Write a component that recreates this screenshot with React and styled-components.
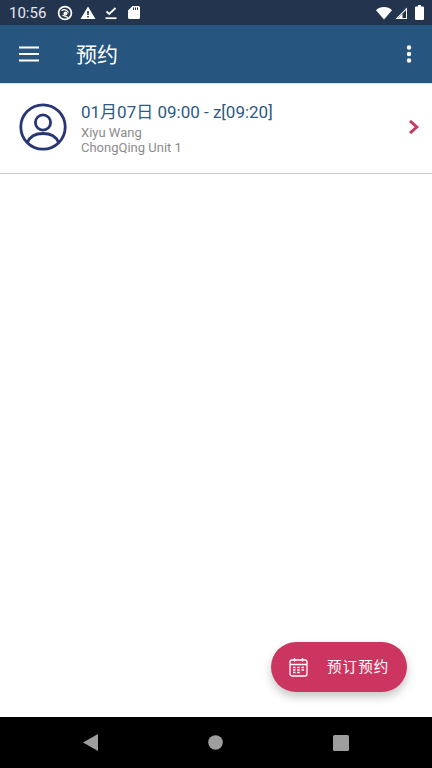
import React from "react";
import styled, { createGlobalStyle } from "styled-components";

const Global = createGlobalStyle`
  html, body { margin: 0; padding: 0; background: #fff; }
  #root { width: 432px; height: 768px; }
`;

const Screen = styled.div`
  position: relative;
  width: 432px;
  height: 768px;
  overflow: hidden;
  display: flex;
  flex-direction: column;
  background: #fff;
  font-family: Roboto, "Noto Sans CJK SC", sans-serif;
`;

const StatusBar = styled.div`
  height: 25px;
  flex: none;
  background: #23344f;
  display: flex;
  align-items: center;
  padding: 0 8px 0 9px;
  color: #e6e9ee;
`;

const Clock = styled.span`
  font-size: 15px;
  line-height: 27px;
  height: 25px;
  width: 48px;
`;

const StatusIcons = styled.div`
  display: flex;
  align-items: center;
  gap: 7px;
`;

const StatusRight = styled.div`
  margin-left: auto;
  display: flex;
  align-items: center;
  gap: 2px;
`;

const AppBar = styled.header`
  height: 58px;
  flex: none;
  background: #26557f;
  border-bottom: 1px solid #d7e3ee;
  box-sizing: content-box;
  display: flex;
  align-items: center;
  padding: 0 20px 0 19px;
  color: #fff;
`;

const Title = styled.h1`
  margin: 0 0 2px 37px;
  font-size: 21px;
  font-weight: 400;
  line-height: 56px;
  font-family: "Noto Sans CJK SC", sans-serif;
`;

const MoreButton = styled.div`
  margin-left: auto;
  display: flex;
`;

const Row = styled.div`
  flex: none;
  height: 90px;
  border-bottom: 1px solid #c9c9c9;
  display: flex;
  align-items: center;
  padding: 0 13px 3px 19px;
  box-sizing: border-box;
`;

const RowText = styled.div`
  margin-left: 14px;
  display: flex;
  flex-direction: column;
  flex: 1;
`;

const Heading = styled.div`
  color: #2d5a82;
  font-size: 17px;
  line-height: 24px;
  margin-bottom: 1px;
`;

const SubLine = styled.div`
  color: #8c8c8c;
  font-size: 13px;
  line-height: 15px;
`;

const Body = styled.main`
  flex: 1;
`;

const Fab = styled.button`
  position: absolute;
  left: 271px;
  top: 642px;
  width: 136px;
  height: 50px;
  border: 0;
  padding: 0 0 0 18px;
  border-radius: 25px;
  background: #cd3561;
  color: #fff;
  display: flex;
  align-items: center;
  gap: 19px;
  box-shadow: 0 5px 10px rgba(0, 0, 0, 0.22);
`;

const FabLabel = styled.span`
  font-family: "Noto Sans CJK SC", sans-serif;
  font-size: 14.5px;
  letter-spacing: 1.1px;
  margin-bottom: 3px;
`;

const NavBar = styled.nav`
  height: 51px;
  flex: none;
  background: #000;
  display: flex;
  align-items: center;
  gap: 110px;
  padding: 0 0 0 83px;
  box-sizing: border-box;
`;

const App = () => (
  <>
    <Global />
    <Screen>
      <StatusBar>
        <Clock>10:56</Clock>
        <StatusIcons>
          <svg width="16" height="16" viewBox="0 0 16 16" fill="none" stroke="#fff">
            <circle cx="8" cy="8" r="6.4" strokeWidth="1.7" />
            <path d="M4.600 5.800a4.200 4.200 0 0 1 6.800 1.800M5.500 10.200l5.800 2.300" strokeWidth="1.300" />
            <circle cx="8.500" cy="8.500" r="2" fill="#fff" stroke="none" />
          </svg>
          <svg width="16" height="16" viewBox="0 0 16 16">
            <path fillRule="evenodd" d="M8 1.500 15.500 14H.5ZM7.200 6v4h1.600V6ZM7.200 11v1.500h1.600V11Z" fill="#fff" />
          </svg>
          <svg width="12" height="16" viewBox="0 0 12 16" fill="none" stroke="#fff" style={{ marginLeft: 2 }}>
            <path d="M1.500 6.500l2.800 2.500L10.500 3" strokeWidth="1.800" />
            <path d="M0.500 13.200h11" strokeWidth="1.700" />
          </svg>
          <svg width="12" height="15" viewBox="0 0 12 15" style={{ marginLeft: 4 }}>
            <path fillRule="evenodd" d="M4.500 1H10.500a1.500 1.500 0 0 1 1.500 1.500v10a1.500 1.500 0 0 1-1.500 1.500h-9A1.500 1.500 0 0 1 0 12.500V5.500ZM5 2.500v2.500h1V2.500ZM7 2.500v2.500h1V2.500ZM9 2.500v2.500h1V2.500Z" fill="#fff" />
          </svg>
        </StatusIcons>
        <StatusRight>
          <svg width="16" height="14" viewBox="0 0 16 14">
            <path d="M0 4.200C2 2.200 4.800 1 8 1S14 2.200 16 4.200L8 13.500Z" fill="#fff" />
          </svg>
          <svg width="14" height="14" viewBox="0 0 14 14">
            <path d="M13 1.500V13H1.500ZM12 4 4 12H12Z" fillRule="evenodd" fill="#fff" />
            <path d="M8.500 8 4 12H8.500Z" fill="#fff" />
          </svg>
          <svg width="9" height="15" viewBox="0 0 9 15" style={{ marginLeft: 5 }}>
            <path d="M3 0H6V1.500H8a1 1 0 0 1 1 1V14a1 1 0 0 1-1 1H1a1 1 0 0 1-1-1V2.500a1 1 0 0 1 1-1H3Z" fill="#fff" />
          </svg>
        </StatusRight>
      </StatusBar>
      <AppBar>
        <svg width="20" height="16" viewBox="0 0 20 16" fill="#fff">
          <rect y="0.500" width="20" height="2" />
          <rect y="7" width="20" height="2" />
          <rect y="13.500" width="20" height="2" />
        </svg>
        <Title>预约</Title>
        <MoreButton>
          <svg width="6" height="18" viewBox="0 0 6 18" fill="#fff">
            <circle cx="3" cy="2.500" r="2.200" />
            <circle cx="3" cy="9" r="2.200" />
            <circle cx="3" cy="15.500" r="2.200" />
          </svg>
        </MoreButton>
      </AppBar>
      <Row>
        <svg width="48" height="48" viewBox="0 0 48 48" fill="none" stroke="#283673" strokeWidth="2.800" style={{ flex: "none" }}>
          <circle cx="24" cy="24" r="22.200" />
          <circle cx="24" cy="19.500" r="7.600" />
          <path d="M8.500 39.500C11 33 17 30.500 24 30.500S37 33 39.500 39.500" />
        </svg>
        <RowText>
          <Heading>01月07日 09:00 - z[09:20]</Heading>
          <SubLine>Xiyu Wang</SubLine>
          <SubLine>ChongQing Unit 1</SubLine>
        </RowText>
        <svg width="11" height="14" viewBox="0 0 11 14" fill="none" stroke="#c93a63" strokeWidth="3">
          <path d="M2 1 8.800 7 2 13" />
        </svg>
      </Row>
      <Body />
      <Fab>
        <svg width="19" height="20" viewBox="0 0 19 20" fill="none" stroke="#fff" strokeWidth="1.300">
          <rect x="1" y="3" width="17" height="16" rx="2" />
          <path d="M1 7.500H18M5.500 1v3.500M13.500 1v3.500" />
          <path d="M4 10.500h2.500M8.200 10.500h2.500M12.500 10.500h2.500M4 13h2.500M8.200 13h2.500M12.500 13h2.500M4 15.500h2.500M8.200 15.500h2.500" strokeWidth="1.500" />
        </svg>
        <FabLabel>预订预约</FabLabel>
      </Fab>
      <NavBar>
        <svg width="15" height="17" viewBox="0 0 15 17">
          <path d="M15 0V17L0 8.500Z" fill="#9e9e9e" />
        </svg>
        <svg width="15" height="15" viewBox="0 0 16 16">
          <circle cx="8" cy="8" r="7.800" fill="#9e9e9e" />
        </svg>
        <svg width="16" height="16" viewBox="0 0 16 16">
          <rect width="16" height="16" rx="1.500" fill="#9e9e9e" />
        </svg>
      </NavBar>
    </Screen>
  </>
);

export default App;
